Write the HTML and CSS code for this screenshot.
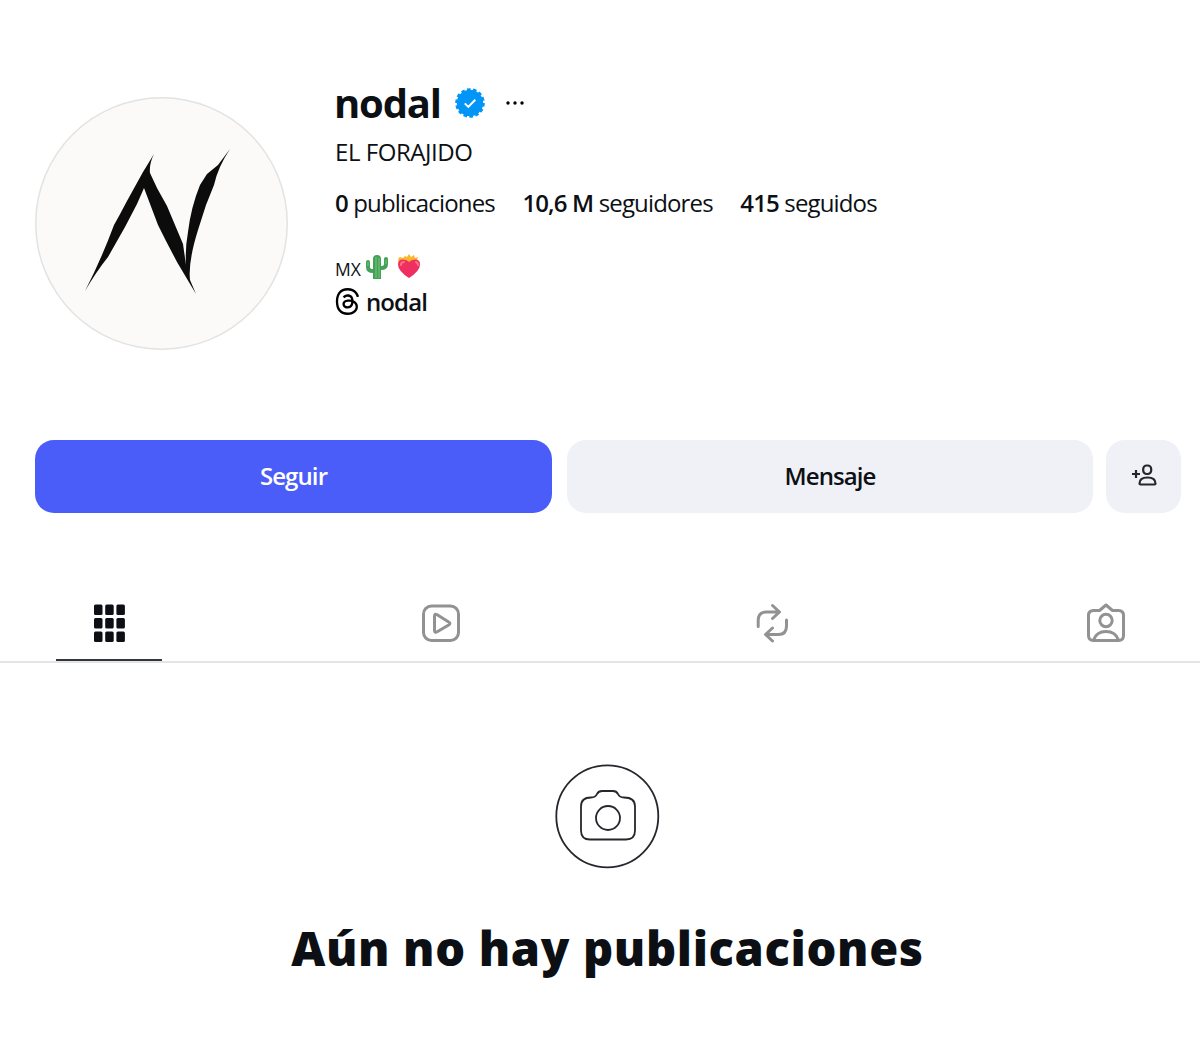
FILE: index.html
```html
<!DOCTYPE html>
<html lang="es">
<head>
    <meta charset="UTF-8">
    <meta name="viewport" content="width=device-width, initial-scale=1.0">
    <title>nodal</title>
    <link rel="stylesheet" href="styles.css">
</head>
<body>
    <header class="profile">
        <div class="avatar">
            <svg viewBox="0 0 253 253">
                <path d="M50 194 Q66 163 79 128 L84 119 L92 104 L108 75 L119 57 Q114 67 115 76 L122 91 L132 109 L148 147 L151 168 Q150 151 153 135 Q156 110 165 88 L172 77 L183 68 L195 52 Q183 70 179 88 L171 108 L163 133 Q153 165 155 183 L161 197 L142 165 L131 144 L123 128 L109 91 L102 107 L90 130 L73 160 Q61 175 50 194Z"/>
            </svg>
        </div>
        <div class="info">
            <div class="name-row">
                <h1>nodal</h1>
                <svg class="verified" viewBox="0 0 30 30">
                    <circle cx="15" cy="15" r="13.2" fill="#0095f6"/>
                    <circle cx="15" cy="15" r="13.6" fill="none" stroke="#0095f6" stroke-width="2.4" pathLength="28" stroke-dasharray="1.2 0.8"/>
                    <path d="M9.8 15.4l3.5 3.5 7-7.2" fill="none" stroke="#fff" stroke-width="2"/>
                </svg>
                <svg class="more" viewBox="0 0 18 4">
                    <circle cx="2" cy="2" r="1.7"/>
                    <circle cx="9" cy="2" r="1.7"/>
                    <circle cx="16" cy="2" r="1.7"/>
                </svg>
            </div>
            <p class="full-name">EL FORAJIDO</p>
            <ul class="stats">
                <li><b>0</b> publicaciones</li>
                <li><b>10,6 M</b> seguidores</li>
                <li><b>415</b> seguidos</li>
            </ul>
            <div class="bio">
                <span class="country">MX</span>
                <svg class="cactus" viewBox="0 0 24 26">
                    <path d="M3 8v5q0 4 5 4h3M21 5v5q0 4-5 4h-3" fill="none" stroke="#43a15a" stroke-width="4" stroke-linecap="round"/>
                    <path d="M8 25V5q0-4 4-4t4 4v20z" fill="#43a15a"/>
                    <path d="M11 3v21M14 4v20M3 8v4M21 6v4" stroke="#78c774" stroke-width="1"/>
                </svg>
                <svg class="heart" viewBox="0 0 24 26">
                    <path d="M2 10Q0 4 3 3l3 1 2-2 2 1 2-3 2 3 3-2 1 3 3-1-1 3 3 2-2 5z" fill="#fdb62c"/>
                    <path d="M12 24Q1 17 1 10.500 1 5.500 6 5.500q4 0 6 2.500 2-2.500 6-2.500 5 0 5 5 0 6.500-11 13.500z" fill="#ee2f60"/>
                    <path d="M4 11q0-3 3-3M19 8q2 1 2 3" fill="none" stroke="#ff7185" stroke-width="2" stroke-linecap="round"/>
                </svg>
            </div>
            <div class="threads">
                <svg viewBox="10 0 172 192">
                    <path d="M141.537 88.9883C140.71 88.5919 139.87 88.2104 139.019 87.8451C137.537 60.5382 122.616 44.905 97.5619 44.745C82.2364 44.7443 69.7731 51.1409 62.102 62.7807L75.881 72.2328C81.6116 63.5383 90.6052 61.6848 97.2286 61.6848C105.707 61.7381 111.932 64.1366 115.961 68.814C118.893 72.2193 120.854 76.925 121.825 82.8638C114.511 81.6207 106.601 81.2385 98.145 81.7233C74.3247 83.0954 59.0111 96.9879 60.0396 116.292C60.5615 126.084 65.4397 134.508 73.775 140.011C80.8224 144.663 89.899 146.938 99.3323 146.423C111.79 145.74 121.563 140.987 128.381 132.296C133.559 125.696 136.834 117.143 138.28 106.366C144.217 109.949 148.617 114.664 151.047 120.332C155.179 129.967 155.42 145.8 142.501 158.708C131.182 170.016 117.576 174.908 97.0135 175.059C74.2042 174.89 56.9538 167.575 45.7381 153.317C35.2355 139.966 29.8077 120.682 29.6052 96C29.8077 71.3178 35.2355 52.0336 45.7381 38.6827C56.9538 24.4249 74.2039 17.11 97.0132 16.9405C119.988 17.1113 137.539 24.4614 149.184 38.788C154.894 45.8136 159.199 54.6488 162.037 64.9503L178.184 60.6422C174.744 47.9622 169.331 37.0357 161.965 27.974C147.036 9.60668 125.202 0.195148 97.0695 0H96.9569C68.8816 0.19447 47.2921 9.6418 32.7883 28.0793C19.8819 44.4864 13.2244 67.3157 13 96C13.2244 124.684 19.8819 147.514 32.7883 163.921C47.2921 182.358 68.8816 191.806 96.9569 192C122.03 191.827 139.624 185.292 154.118 170.811C173.081 151.866 172.51 128.119 166.26 113.541C161.776 103.087 153.227 94.5962 141.537 88.9883ZM98.4405 129.507C88.0005 130.095 77.1544 125.409 76.6196 115.372C76.2232 107.93 81.9158 99.626 99.0812 98.6368C101.047 98.5234 102.976 98.468 104.871 98.468C111.106 98.468 116.939 99.0737 122.242 100.233C120.264 124.935 108.662 128.946 98.4405 129.507Z"/>
                </svg>
                <span>nodal</span>
            </div>
        </div>
    </header>

    <div class="actions">
        <button class="follow">Seguir</button>
        <button class="message">Mensaje</button>
        <button class="suggest">
            <svg viewBox="0 0 26 24">
                <g fill="none" stroke="#24272b" stroke-width="2.2">
                    <path d="M1 10h8M5 6v8"/>
                    <rect x="12.2" y="1.500" width="8" height="8.500" rx="3.500"/>
                    <path d="M8.500 19.500q0-6 8-6t8 6q0 1-1 1h-14q-1 0-1-1z"/>
                </g>
            </svg>
        </button>
    </div>

    <nav class="tabs">
        <a class="tab active">
            <svg viewBox="0 0 40 40">
                <g fill="#0c1014">
                    <rect x="5" y="1.5" width="8.500" height="10.5" rx="1.5"/>
                    <rect x="16.200" y="1.5" width="8.500" height="10.5" rx="1.5"/>
                    <rect x="27.400" y="1.5" width="8.500" height="10.5" rx="1.5"/>
                    <rect x="5" y="15" width="8.500" height="10.5" rx="1.5"/>
                    <rect x="16.200" y="15" width="8.500" height="10.5" rx="1.5"/>
                    <rect x="27.400" y="15" width="8.500" height="10.5" rx="1.5"/>
                    <rect x="5" y="28.5" width="8.500" height="10.5" rx="1.5"/>
                    <rect x="16.200" y="28.5" width="8.500" height="10.5" rx="1.5"/>
                    <rect x="27.400" y="28.5" width="8.500" height="10.5" rx="1.5"/>
                </g>
            </svg>
        </a>
        <a class="tab">
            <svg viewBox="0 0 40 40">
                <rect x="2.5" y="3" width="35" height="34.5" rx="8"/>
                <path d="M13.5 13.3v14q0 3 2.7 1.5l11.5-6.8q2.4-1.5 0-3L16.2 11.8q-2.7-1.5-2.7 1.5z"/>
            </svg>
        </a>
        <a class="tab">
            <svg viewBox="0 0 40 40">
                <path d="M4.2 23.500v-6q0-8.500 8-8.500H25M18.500 2.500l7 6.500-7 6.500M32.500 17v6q0 8.500-8 8.500H12M18.500 25l-7 6.500 7 6.500" stroke-linecap="round"/>
            </svg>
        </a>
        <a class="tab">
            <svg viewBox="0 0 40 40">
                <path d="M7.500 7.500h6L20 2l6.500 5.500h6q5 0 5 5v20q0 5-5 5h-25q-5 0-5-5v-20q0-5 5-5z"/>
                <circle cx="20" cy="17.500" r="6.200"/>
                <path d="M7.500 37q3-8.500 12.500-8.500t12.500 8.500"/>
            </svg>
        </a>
    </nav>

    <main class="empty">
        <svg viewBox="0 0 104 104">
            <g fill="none" stroke="#24272b" stroke-width="1.8">
                <circle cx="51.3" cy="52.3" r="51"/>
                <path d="M35 33.500q4.500 0 6-3.500 1.500-3 5-3h11q3.500 0 5 3 1.500 3.500 6 3.500 11 0 11 9v24q0 9-9 9H34q-9 0-9-9v-24q0-9 10-9z"/>
                <circle cx="52" cy="54" r="12"/>
            </g>
        </svg>
        <h2>Aún no hay publicaciones</h2>
    </main>
</body>
</html>
```
FILE: styles.css
```css
* {
    box-sizing: border-box;
}
body {
    margin: 0;
    font-family: "Open Sans", "Noto Sans", sans-serif;
    font-size: 24px;
    color: #0c1014;
    background: #fff;
}
svg {
    display: block;
    flex: none;
    overflow: visible;
}
h1, h2, p, ul {
    margin: 0;
    padding: 0;
}
.profile {
    display: flex;
    gap: 47px;
    height: 440px;
    padding: 80px 0 0 35px;
}
.avatar {
    width: 253px;
    height: 253px;
    margin-top: 17px;
    border-radius: 50%;
    background: #fbfaf9;
    box-shadow: inset 0 0 0 1.5px #e3e3e3;
}
.avatar path {
    fill: #0c0c0c;
}
.name-row {
    display: flex;
    align-items: center;
    height: 46px;
}
h1 {
    margin-left: -1px;
    font-size: 40px;
    line-height: 46px;
    font-weight: 700;
    letter-spacing: -1.2px;
}
.verified {
    width: 30px;
    height: 30px;
    margin-left: 14px;
}
.more {
    width: 18px;
    height: 4px;
    margin-left: 21px;
}
.full-name {
    margin-top: 9px;
    line-height: 34px;
    letter-spacing: -0.45px;
}
.stats {
    display: flex;
    gap: 27.5px;
    margin-top: 17px;
    line-height: 34px;
    list-style: none;
    letter-spacing: -0.85px;
}
.stats b {
    font-weight: 600;
}
.bio {
    display: flex;
    align-items: center;
    height: 34px;
    margin-top: 30px;
}
.country {
    padding-top: 3px;
    font-size: 17.5px;
}
.cactus {
    width: 24px;
    height: 26px;
    margin-left: 4px;
}
.heart {
    width: 24px;
    height: 26px;
    margin-left: 8px;
}
.threads {
    display: flex;
    align-items: center;
    gap: 6px;
    height: 34px;
    font-weight: 600;
    letter-spacing: -0.9px;
}
.threads svg {
    width: 25px;
    height: 27px;
}
.actions {
    display: flex;
    height: 73px;
    padding-left: 35px;
}
button {
    display: flex;
    align-items: center;
    justify-content: center;
    padding: 0 0 2px;
    border: none;
    border-radius: 19px;
    font-family: inherit;
    font-size: 24px;
    font-weight: 600;
    letter-spacing: -0.9px;
    color: #0c1014;
    background: #f0f1f6;
}
.follow {
    width: 517px;
    color: #fff;
    background: #4a5df9;
}
.message {
    width: 526px;
    margin-left: 15px;
}
.suggest {
    width: 75px;
    margin-left: 13px;
}
.suggest svg {
    width: 26px;
    height: 24px;
}
.tabs {
    display: flex;
    justify-content: space-between;
    height: 78px;
    margin-top: 72px;
    padding: 0 41px 0 56px;
    border-bottom: 2px solid #e2e4e7;
}
.tab {
    display: flex;
    justify-content: center;
    width: 106px;
    height: 76px;
    padding-top: 18px;
}
.tab.active {
    border-bottom: 2px solid #33363a;
}
.tab svg {
    width: 40px;
    height: 40px;
    fill: none;
    stroke: #929292;
    stroke-width: 3;
    stroke-linejoin: round;
}
.tab.active svg {
    stroke: none;
}
.empty {
    display: flex;
    flex-direction: column;
    align-items: center;
    padding: 101px 0 0 15px;
}
.empty svg {
    width: 104px;
    height: 104px;
}
h2 {
    margin-top: 50px;
    font-size: 47px;
    line-height: 60px;
    font-weight: 800;
    letter-spacing: 0.65px;
    white-space: nowrap;
}
```
